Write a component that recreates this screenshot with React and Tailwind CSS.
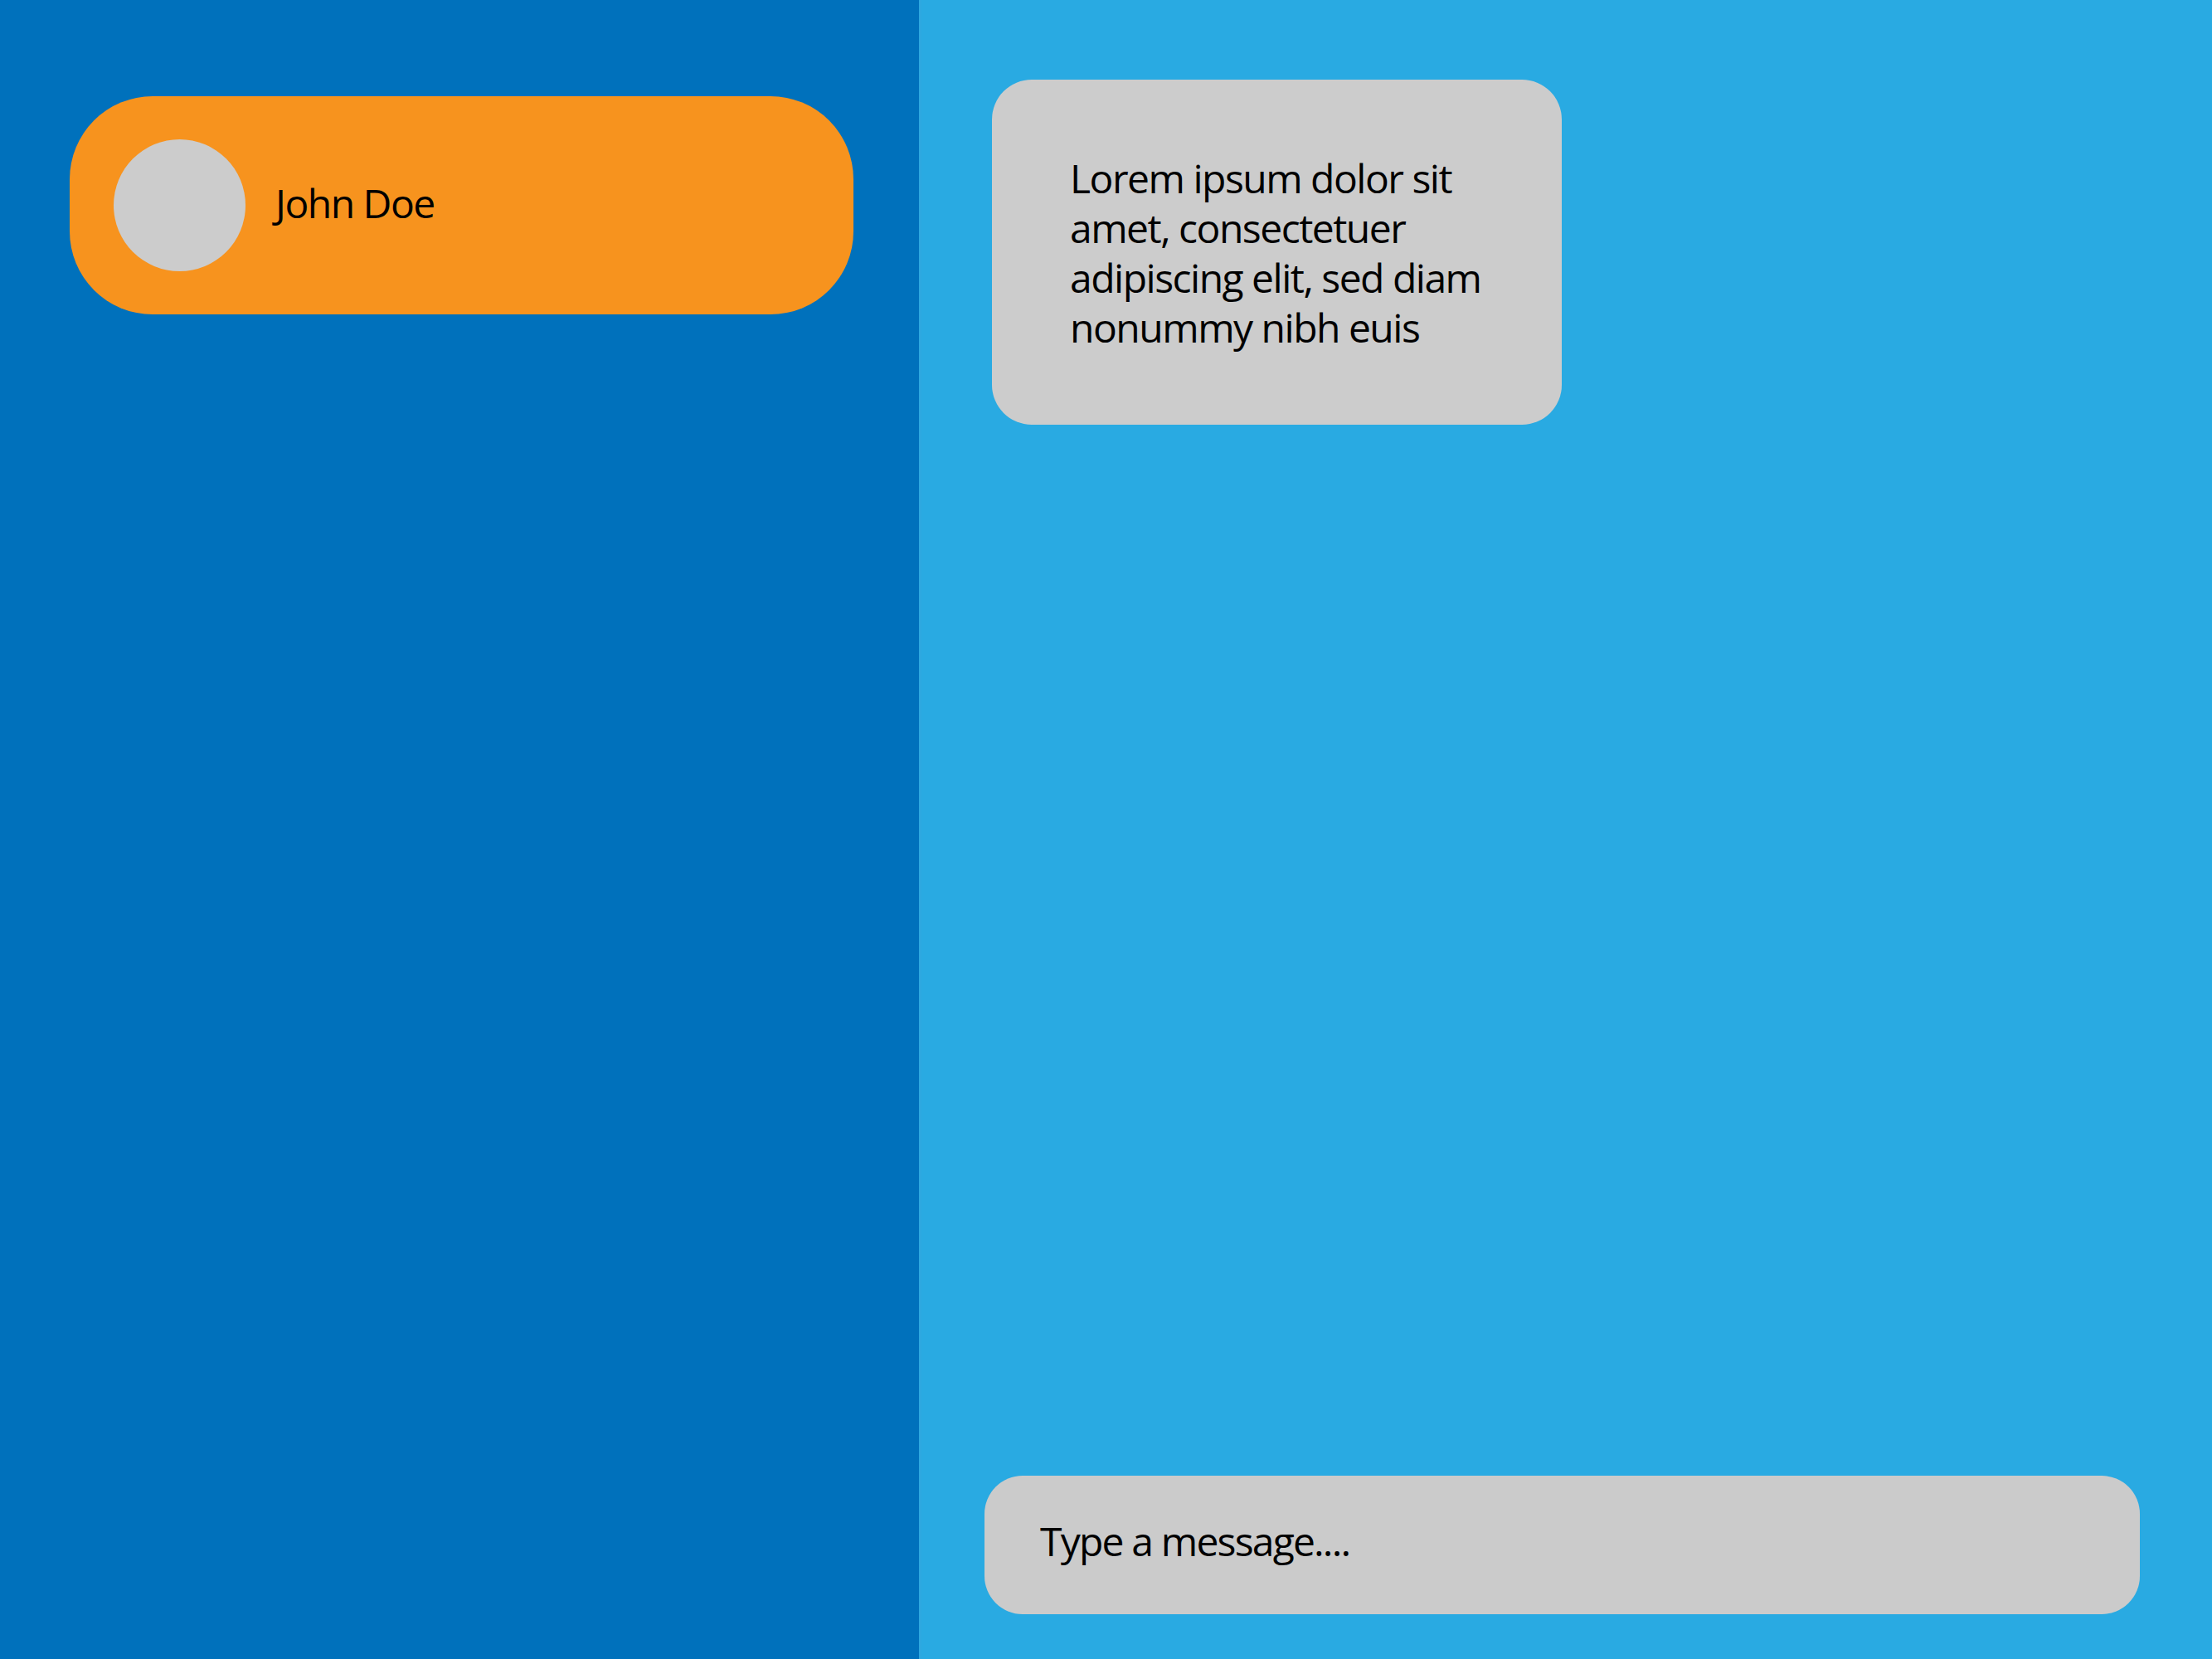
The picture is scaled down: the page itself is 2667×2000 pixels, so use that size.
export default function App() {
  const font = { fontFamily: '"Open Sans", "Noto Sans", sans-serif' };
  return (
    <div className="flex w-[2667px] h-[2000px] overflow-hidden text-black" style={font}>
      <aside className="w-[1108px] h-full bg-[#0071bc] pl-[84px] pt-[116px]">
        <div className="flex items-center w-[945px] h-[263px] rounded-[100px] bg-[#f7931e] pl-[53px]">
          <div className="w-[159px] h-[159px] rounded-full bg-[#cccccc] shrink-0" />
          <span className="ml-[36px] mb-[6px] text-[48px] leading-none tracking-[-1.5px]">John Doe</span>
        </div>
      </aside>
      <main className="flex-1 h-full bg-[#29aae2] flex flex-col border-l-[3px] border-[#2ea8e0]">
        <div className="ml-[85px] mt-[96px] w-[687px] h-[416px] rounded-[48px] bg-[#cccccc] pl-[94px] pt-[89px]">
          <p className="text-[48px] leading-[60px] tracking-[-1.5px] w-[560px]">
            Lorem ipsum dolor sit amet, consectetuer adipiscing elit, sed diam nonummy nibh euis
          </p>
        </div>
        <div className="mt-auto mb-[54px] ml-[76px] w-[1393px] h-[167px] rounded-[46px] bg-[#cbcbcb] flex items-center pl-[67px]">
          <span className="mb-[9px] text-[48px] leading-none tracking-[-1.8px]">Type a message....</span>
        </div>
      </main>
    </div>
  );
}
